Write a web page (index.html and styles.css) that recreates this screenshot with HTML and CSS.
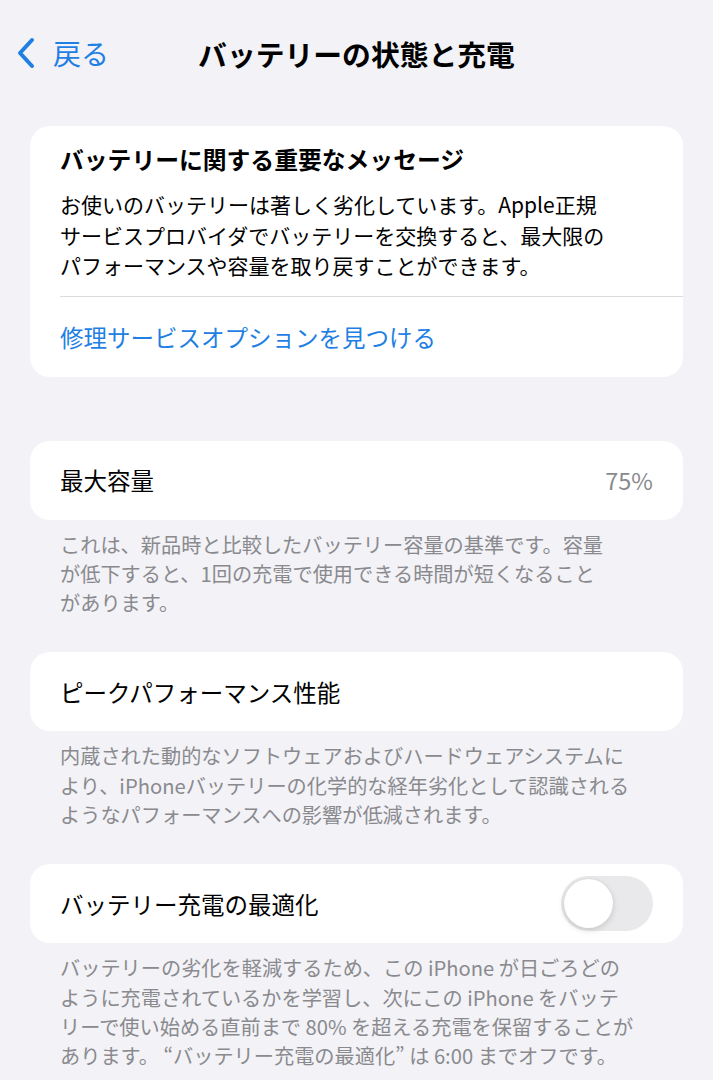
FILE: index.html
```html
<!DOCTYPE html>
<html lang="ja">
<head>
  <meta charset="UTF-8">
  <meta name="viewport" content="width=device-width, initial-scale=1.0">
  <title>バッテリーの状態と充電</title>
  <link rel="stylesheet" href="styles.css">
</head>
<body>
  <header class="navbar">
    <a class="back" href="#">
      <svg class="chevron" width="18" height="32" viewBox="0 0 18 32">
        <polyline points="15,3 3,16 15,29" fill="none" stroke="currentColor" stroke-width="4" stroke-linecap="round" stroke-linejoin="round"/>
      </svg>
      <span>戻る</span>
    </a>
    <h1 class="title">バッテリーの状態と充電</h1>
    <div></div>
  </header>

  <section class="card message">
    <h2 class="message-title">バッテリーに関する重要なメッセージ</h2>
    <p class="message-body">お使いのバッテリーは著しく劣化しています。Apple正規<br>サービスプロバイダでバッテリーを交換すると、最大限の<br>パフォーマンスや容量を取り戻すことができます。</p>
    <div class="separator"></div>
    <a class="link-row" href="#">修理サービスオプションを見つける</a>
  </section>

  <section class="card row">
    <span>最大容量</span>
    <span class="value">75%</span>
  </section>
  <p class="footer">これは、新品時と比較したバッテリー容量の基準です。容量<br>が低下すると、1回の充電で使用できる時間が短くなること<br>があります。</p>

  <section class="card row">
    <span>ピークパフォーマンス性能</span>
  </section>
  <p class="footer">内蔵された動的なソフトウェアおよびハードウェアシステムに<br>より、iPhoneバッテリーの化学的な経年劣化として認識される<br>ようなパフォーマンスへの影響が低減されます。</p>

  <section class="card row">
    <span>バッテリー充電の最適化</span>
    <div class="toggle"><div class="knob"></div></div>
  </section>
  <p class="footer">バッテリーの劣化を軽減するため、この iPhone が日ごろどの<br>ように充電されているかを学習し、次にこの iPhone をバッテ<br>リーで使い始める直前まで 80% を超える充電を保留することが<br>あります。 “バッテリー充電の最適化” は 6:00 までオフです。</p>
</body>
</html>
```

FILE: styles.css
```css
body {
  margin: 0;
  background-color: #f2f2f7;
  font-family: "Noto Sans CJK JP", "Noto Sans", sans-serif;
  color: #000;
}
.navbar {
  display: grid;
  grid-template-columns: 1fr auto 1fr;
  align-items: center;
  height: 106px;
}
.back {
  display: flex;
  align-items: center;
  gap: 18px;
  padding-left: 17px;
  color: #1f7fe3;
  text-decoration: none;
  font-size: 28px;
}
.title {
  margin: 0;
  font-size: 28.8px;
  font-weight: 700;
}
.card {
  background: #fff;
  border-radius: 20px;
  margin: 0 30px;
}
.message {
  margin-top: 20px;
  padding-top: 17px;
  margin-bottom: 64px;
}
.message-title {
  margin: 0;
  padding: 0 30px;
  font-size: 23.8px;
  line-height: 32px;
  font-weight: 700;
}
.message-body {
  margin: 14px 0 0;
  padding: 0 30px;
  font-size: 21px;
  line-height: 30.5px;
}
.separator {
  height: 1px;
  background: #dcdce0;
  margin: 15px 0 0 30px;
}
.link-row {
  display: flex;
  align-items: center;
  height: 80px;
  padding: 0 30px;
  color: #1f7fe3;
  text-decoration: none;
  font-size: 23.5px;
}
.row {
  display: flex;
  align-items: center;
  justify-content: space-between;
  height: 79px;
  padding: 0 30px;
  font-size: 23.5px;
}
.value {
  color: #8a8a8e;
}
.footer {
  margin: 0 0 35px;
  padding: 10px 20px 0 60px;
  font-size: 20.2px;
  line-height: 29.3px;
  color: #8a8a8e;
}
.toggle {
  width: 92px;
  height: 55px;
  border-radius: 28px;
  background: #e9e9eb;
  display: flex;
  align-items: center;
  padding: 0 3px;
  box-sizing: border-box;
}
.knob {
  width: 49px;
  height: 49px;
  border-radius: 50%;
  background: #fff;
  box-shadow: 0 2px 6px rgba(0, 0, 0, 0.15), 0 0 1px rgba(0, 0, 0, 0.1);
}
```
